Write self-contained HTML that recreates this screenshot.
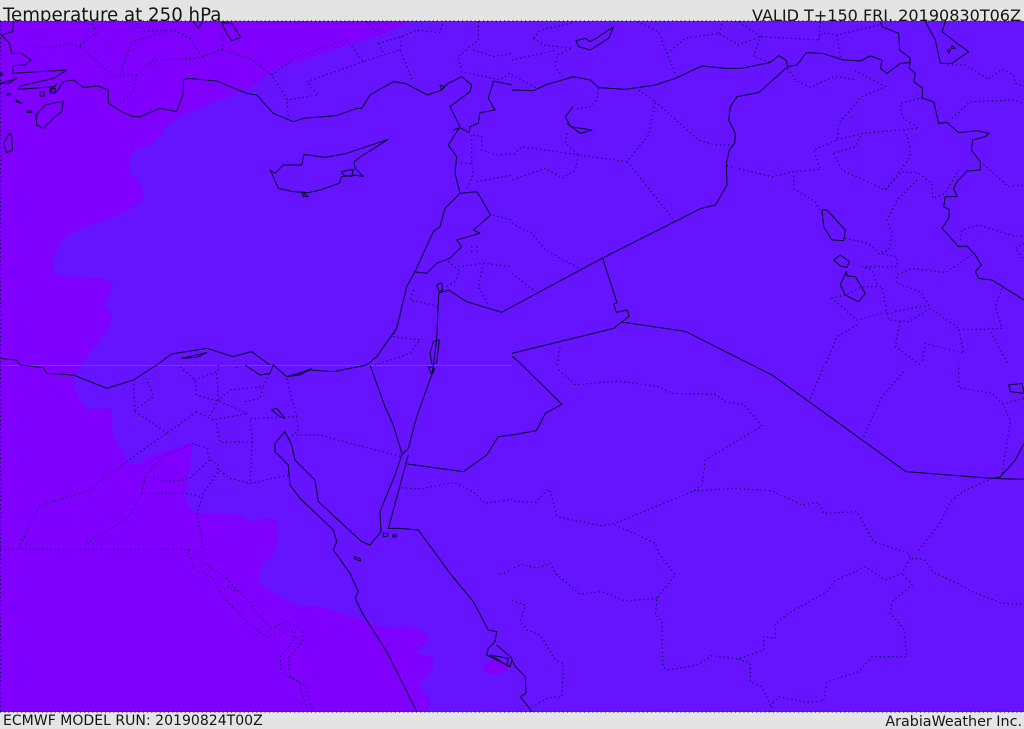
<!DOCTYPE html>
<html><head><meta charset="utf-8"><title>Temperature at 250 hPa</title>
<style>
html,body{margin:0;padding:0;background:#e4e4e4;width:1024px;height:729px;overflow:hidden}
svg{display:block}
text{font-family:"DejaVu Sans","Liberation Sans",sans-serif;fill:#151515}
.s path{fill:none;stroke:#05002a;stroke-width:1;vector-effect:non-scaling-stroke;stroke-linejoin:round}
.d path{fill:none;stroke:#0a0050;stroke-width:1.1;stroke-dasharray:1.2 3;vector-effect:non-scaling-stroke}
</style></head><body>
<svg width="1024" height="729" viewBox="0 0 1024 729" xmlns="http://www.w3.org/2000/svg">
<rect width="1024" height="729" fill="#e4e4e4"/>
<text x="3" y="21" font-size="18.2">Temperature at 250 hPa</text>
<text x="1021" y="21" font-size="16.05" text-anchor="end">VALID T+150 FRI. 20190830T06Z</text>
<text x="3" y="725" font-size="14.05">ECMWF MODEL RUN: 20190824T00Z</text>
<text x="1022" y="726" font-size="14.3" text-anchor="end">ArabiaWeather Inc.</text>
<rect x="0" y="21" width="1024" height="691" fill="#6614ff"/>
<path fill="#7f00ff" d="M408 21C395 30 370 39 345 46C325 52 300 62 278 68L260 80L250 88C235 94 205 105 195 110C175 118 165 125 160 135C155 145 140 149 135 150C130 155 129 163 129 170C133 178 142 183 144 195C143 203 125 213 100 222C80 229 68 233 60 243C55 252 53 262 53 270C56 277 70 277 85 277C100 278 113 279 113 286C112 293 104 300 104 306C107 312 113 313 112 319C108 332 95 345 80 365L73 380C75 392 80 404 88 409L112 408C113 420 111 425 113 435C117 445 122 450 125 458L128 464L140 464L150 457C165 451 180 447 193 442L188 478L185 497C186 503 188 506 190 508C197 512 200 514 207 514L233 514C240 515 245 520 250 521C255 522 262 518 267 518C272 519 277 521 278 525C278 535 277 545 275 552C272 558 265 560 262 565C259 572 260 578 259 583L290 603C300 606 310 605 320 607C335 610 345 615 357 618C368 622 375 626 383 627C395 629 405 627 413 628C420 630 426 633 428 637C426 645 418 648 417 653C422 656 432 655 433 658C434 665 432 668 430 672C427 678 420 680 419 685C420 692 430 695 430 700C431 705 428 708 427 712L0 712L0 21Z"/>
<path fill="#7f00ff" d="M484 668C485 663 490 660 494 660C500 661 505 663 509 666C505 672 501 675 496 675C489 675 484 673 484 668Z"/>
<path d="M0 365.500H512" stroke="#8d4dff" stroke-width="1" opacity=".6"/>

<!-- frame dots -->
<g class="d">
<path d="M0 21H1024M0 712H1024M0.500 21V712"/>
</g>

<!-- top-left quadrant -->
<g transform="scale(.33333)">
<g class="d">
<path d="M80 135L150 145L200 128L240 140L330 220L350 230L410 225"/>
<path d="M410 225L460 180L590 175L665 150L750 175L815 225L860 295L865 350"/>
<path d="M240 135L290 100L275 65"/>
<path d="M360 225L395 125L520 90L570 115L600 160"/>
<path d="M410 225L400 280L355 310"/>
<path d="M410 70L420 95L500 90"/>
<path d="M665 150L670 110"/>
<path d="M815 225L890 170L1040 118L1090 185L1150 165L1200 150L1240 245"/>
<path d="M1090 185L920 245L955 285L860 300"/>
<path d="M1135 130L1205 110L1250 90L1320 98L1330 65"/>
<path d="M1135 130L1150 160M1205 110L1200 150M1100 65L1145 110"/>
<path d="M1435 65L1435 120L1375 170L1385 215L1500 240L1536 215"/>
<path d="M1420 150L1480 170L1536 160"/>
<path d="M1415 405L1415 490L1375 490"/>
<path d="M1420 405L1445 410L1445 450L1490 465L1536 460"/>
<path d="M1415 490L1420 520L1400 570M1430 545L1536 525M1480 645L1536 660"/>
<path d="M1345 785L1375 810L1370 840L1340 860"/>
<path d="M1375 800L1450 790L1536 800"/>
<path d="M1450 790L1435 860L1465 915"/>
<path d="M1240 870L1230 900L1300 915L1316 925"/>
<path d="M1200 950L1180 1010L1260 1020L1230 1060L1125 1095"/>
<path d="M1415 740V760M1430 740V760"/>
</g>
<g class="s">
<path d="M40 65L38 95L5 105L28 130L35 160L65 160L93 180L75 195L40 197L38 220L70 218L200 210L160 235L60 258L55 268L165 260L170 250L150 275L170 275L190 245L220 240L250 262L295 258L325 270L325 310L365 335L400 350L420 350L480 325L530 335L550 280L550 240L565 235L650 243L740 280L770 285L820 340L880 365L910 355L1010 347L1070 325L1085 325L1110 285L1180 245L1215 250L1283 285L1320 272L1345 250L1385 230L1415 255L1410 275L1350 320L1380 380L1345 435L1370 470L1365 520L1380 580L1335 625L1320 680L1300 695L1245 815L1220 860L1190 985L1130 1070L1100 1095"/>
<path d="M810 510L825 520L850 495L905 495L912 463L975 472L1040 460L1165 418L1090 465L1062 485L1065 505L1090 530L1065 525L1025 530L1018 550L960 570L925 578L880 575L835 565L820 530Z"/>
<path d="M1025 515L1060 508L1055 530L1030 525ZM905 575L925 590L910 590Z"/>
<path d="M190 303L185 335L165 350L130 385L110 375L108 345L135 315Z"/>
<path d="M10 430L30 398L35 410L38 450L20 458Z"/>
<path d="M665 68L695 70L722 112L695 122L680 100ZM580 65L595 85L607 65"/>
<path d="M0 250L50 235L25 250ZM20 280H30V285H20ZM48 300L65 310L48 305ZM80 333H95V337H80ZM120 275H133V288H120ZM150 265H165V280H150ZM0 220H8V225H0Z"/>
<path d="M1480 243L1536 255M1480 243L1465 295L1485 330L1440 338L1435 370L1410 380L1408 398L1380 383L1360 390"/>
<path d="M1240 815L1280 820L1310 790L1350 775L1385 740L1370 720L1440 700L1420 690L1472 645L1440 590L1430 575L1380 580"/>
<path d="M1316 880L1345 870L1400 905L1505 937L1536 920"/>
<path d="M1316 880L1310 1020L1300 1095"/>
<path d="M1290 1060L1300 1025L1318 1020L1310 1090L1295 1090Z"/>
<path d="M1310 855L1325 848L1328 870L1318 875Z"/>
<path d="M1320 255L1335 260L1325 270Z"/>
<path d="M0 1075L50 1080L60 1095M470 1095L515 1062L620 1045L700 1070L755 1055L810 1095"/>
<path d="M545 1075L620 1058L590 1072Z"/>
</g>
</g>

<!-- top-right quadrant -->
<g transform="translate(512 0) scale(.33333)">
<g class="d">
<path d="M65 115L85 90L180 70M65 115L95 135L180 145L135 165L130 200L160 240"/>
<path d="M0 180L135 150M0 225L75 265"/>
<path d="M375 65L440 95L465 160L490 220"/>
<path d="M465 160L520 115L620 100L680 135L745 110L920 120L930 98L975 105L1100 75"/>
<path d="M620 100L630 70M680 65L745 110L725 170L775 187M975 105L985 170M920 120L925 65"/>
<path d="M260 265L255 300L235 320L185 328"/>
<path d="M165 400L160 430L200 465L345 485L410 405L430 305L380 270"/>
<path d="M430 305L560 420L610 435L665 435"/>
<path d="M345 485L490 665"/>
<path d="M200 465L30 440L0 470"/>
<path d="M200 465L190 510L150 535L100 505L0 540"/>
<path d="M0 670L60 700L100 750L200 805M0 820L70 875"/>
<path d="M645 497L780 530L845 515L925 508L905 450L975 420L980 370L1050 290L1120 260L1025 210"/>
<path d="M827 205L850 240L895 262L970 228L1030 240"/>
<path d="M845 515L845 565L910 605L930 640"/>
<path d="M975 420L1050 400L1220 385L1170 350L1165 310L1225 295"/>
<path d="M965 460L1030 440L1050 400"/>
<path d="M965 460L990 510L1120 570L1195 470L1190 420L1175 390"/>
<path d="M1120 570L1170 515L1220 520L1260 550L1262 595L1300 580L1340 510"/>
<path d="M1215 540L1155 600L1125 660L1140 700L1130 750L1100 760"/>
<path d="M1000 715L1070 730L1100 760L1155 770L1155 800L1050 800L1080 810L1098 860"/>
<path d="M1380 765L1300 818L1200 805L1155 825L1155 850L1225 875L1250 915L1125 940L1110 860L1050 860L1000 885L960 895L1035 960L1125 935L1130 960L1190 965L1255 925L1340 985L1355 1060L1240 1030L1230 1090"/>
<path d="M1035 975L975 1010L940 1095M1165 965L1150 1040L1225 1095"/>
<path d="M1340 990L1470 985L1450 920L1470 865M1430 985L1490 1095"/>
<path d="M1320 355L1375 305L1510 300L1536 310"/>
<path d="M1405 485L1490 560L1536 555"/>
<path d="M1430 235L1470 208L1505 225L1510 250L1536 258"/>
<path d="M1425 235L1360 195L1300 195"/>
<path d="M1345 720L1350 690L1400 675L1510 710L1536 705"/>
<path d="M1536 730L1510 745L1536 780"/>
<path d="M135 1095L145 1035"/>
</g>
<g class="s">
<path d="M0 270L65 272L100 255L185 230L235 240L260 263L340 268L430 255L490 235L570 198L640 205L690 205L775 187L800 167L822 180L827 200L855 195L883 158L930 160L995 180L1045 183L1075 168L1110 180L1105 205L1125 220L1165 190L1195 187"/>
<path d="M1105 65L1110 80L1160 100L1163 150L1195 175L1192 205L1210 220L1205 245L1232 265L1230 295L1265 305L1280 370L1305 367L1340 398L1395 392L1432 400L1420 410L1382 420L1378 450L1405 485L1405 510L1365 513L1335 545L1325 565L1335 590L1300 590L1295 620L1313 630L1310 655L1290 685L1340 740L1365 738L1390 765L1408 795L1390 815L1400 835L1440 840L1536 900"/>
<path d="M827 200L740 278L675 290L655 320L650 360L670 400L668 430L652 450L643 490L645 555L610 615L568 625L270 775L0 920"/>
<path d="M272 775L315 908L305 912L313 937L345 930L352 948L305 985L0 1060"/>
<path d="M328 966L520 994L720 1095M0 1068L30 1095"/>
<path d="M192 122L220 115L235 125L260 110L305 80L290 115L235 150L200 140Z"/>
<path d="M183 320L160 350L175 380L240 390L205 400L165 370"/>
<path d="M1240 65L1270 120L1285 190L1320 190L1370 155L1335 130L1290 95L1300 65"/>
<path d="M1305 150L1315 150L1310 160ZM1320 137L1330 145L1318 145Z"/>
<path d="M930 630L945 630L1000 690L995 722L960 720L935 680Z"/>
<path d="M965 780L985 765L1012 785L1005 802L985 798Z"/>
<path d="M1003 815L1005 828L1030 830L1060 880L1040 905L1000 885L985 855Z"/>
</g>
</g>

<!-- bottom-left quadrant -->
<g transform="translate(0 365) scale(.33333)">
<g class="d">
<path d="M55 550L120 420L260 380L380 290L590 140"/>
<path d="M0 553L565 553L605 565"/>
<path d="M590 140L640 165L745 145L660 110L590 90L585 45L540 5"/>
<path d="M400 45L405 135L460 95L440 40M405 140L510 210"/>
<path d="M585 45L650 20L655 105L690 75L790 65L810 20"/>
<path d="M655 0V20M710 5V18M735 110L780 100L790 60M655 105L625 160"/>
<path d="M650 175L660 232L757 230L750 160L890 155L860 40"/>
<path d="M890 155L895 195L860 230"/>
<path d="M757 230L750 355L865 330M650 310L690 340L750 355"/>
<path d="M890 210L960 210L1070 240L1205 275"/>
<path d="M585 238L620 250L630 285L655 300L655 320L610 385L590 450L605 520L605 565"/>
<path d="M628 285L570 340L515 350L435 335L425 385L560 385L605 395"/>
<path d="M580 235L490 275L435 335M425 385L385 460L265 530L260 545"/>
<path d="M565 555L580 610L640 640L660 685L750 780L800 815L880 795L885 820L840 875L845 925L915 960L940 1040"/>
<path d="M605 590L680 640L750 715L810 790L860 770L910 795L905 835L865 880L870 935L895 950L925 1040"/>
<path d="M660 680L690 665L710 680"/>
<path d="M1205 368L1260 372L1360 352L1420 380L1455 415L1536 403"/>
<path d="M1500 628L1536 615"/>
</g>
<g class="s">
<path d="M60 0L130 8L140 25L220 30L320 70L400 45L470 0"/>
<path d="M735 0L780 30L810 25L820 0L860 35L930 15L1000 20L1100 0"/>
<path d="M1110 0L1155 125L1180 180L1207 270"/>
<path d="M1295 30L1250 155L1225 250L1205 270L1185 330L1140 440L1143 500L1110 540L1085 530L1020 470L955 410L945 345L885 285L875 240L855 200L825 235L825 260L865 300L870 360L900 400L1000 495L1010 530L1000 555L1050 625L1075 680L1065 700L1090 750L1160 860L1250 1040"/>
<path d="M1225 270L1165 490L1200 490L1255 495L1310 570L1350 625L1420 710L1465 795L1490 800L1485 830L1465 850L1460 870L1530 905L1536 880L1490 840"/>
<path d="M1300 0L1295 30M1285 5L1305 10L1295 30Z"/>
<path d="M815 135L830 130L855 160L840 155Z"/>
<path d="M1150 505L1165 505L1160 515L1150 515ZM1178 510H1188V516H1178Z"/>
<path d="M1062 575L1080 580L1082 588L1065 582Z"/>
<path d="M1470 870L1525 880L1520 900Z"/>
<path d="M860 35L900 25L935 10L900 30Z"/>
<path d="M1536 210L1495 215L1460 270L1390 320L1222 297"/>
</g>
</g>

<!-- bottom-right quadrant -->
<g transform="translate(512 365) scale(.33333)">
<g class="d">
<path d="M140 15L190 60L320 48L440 65L480 85L610 88L640 110L695 118L750 183L580 285L570 360L545 378L310 475L265 482L135 455L115 380L108 372L70 413L0 408"/>
<path d="M545 378L670 370L780 378L870 420L920 412L935 445L1035 440L1085 530L1190 565L1195 580L1235 582L1265 622L1345 660L1380 680L1470 715L1536 718"/>
<path d="M1195 580L1170 625L1120 645L1060 605L965 650L945 680L830 745L790 775L790 820L755 815L755 855L680 882L600 872L555 900L470 915L452 905L450 770L430 750L435 700L490 630L440 565L430 535L310 480"/>
<path d="M435 700L340 708L270 680L205 688L130 625L115 595L75 610L30 598L0 610"/>
<path d="M680 882L715 895L715 950L750 965L775 1020L800 995L880 1012L935 1008L945 950L1040 920L1080 875L1185 875L1175 790L1135 745L1140 710L1200 660L1170 625"/>
<path d="M1220 555L1280 480L1320 405L1360 375L1440 340"/>
<path d="M0 705L40 720L25 770L45 795L85 810L130 885L155 895L150 995L110 998L60 1025"/>
<path d="M1470 325L1495 170L1475 120L1440 85L1340 68L1340 0"/>
<path d="M1470 118L1536 100M1055 215L1110 95L1180 15M895 100L935 5M775 1040L785 1010"/>
</g>
<g class="s">
<path d="M30 0L150 118L100 145L73 197L0 210"/>
<path d="M720 0L780 30L1182 320L1440 340L1536 343"/>
<path d="M1440 340L1465 335L1510 285L1536 235"/>
<path d="M0 885L10 905L40 935L42 985L25 995L60 1040"/>
<path d="M1490 60L1530 55L1536 85L1495 80Z"/>
</g>
</g>
</svg>
</body></html>
